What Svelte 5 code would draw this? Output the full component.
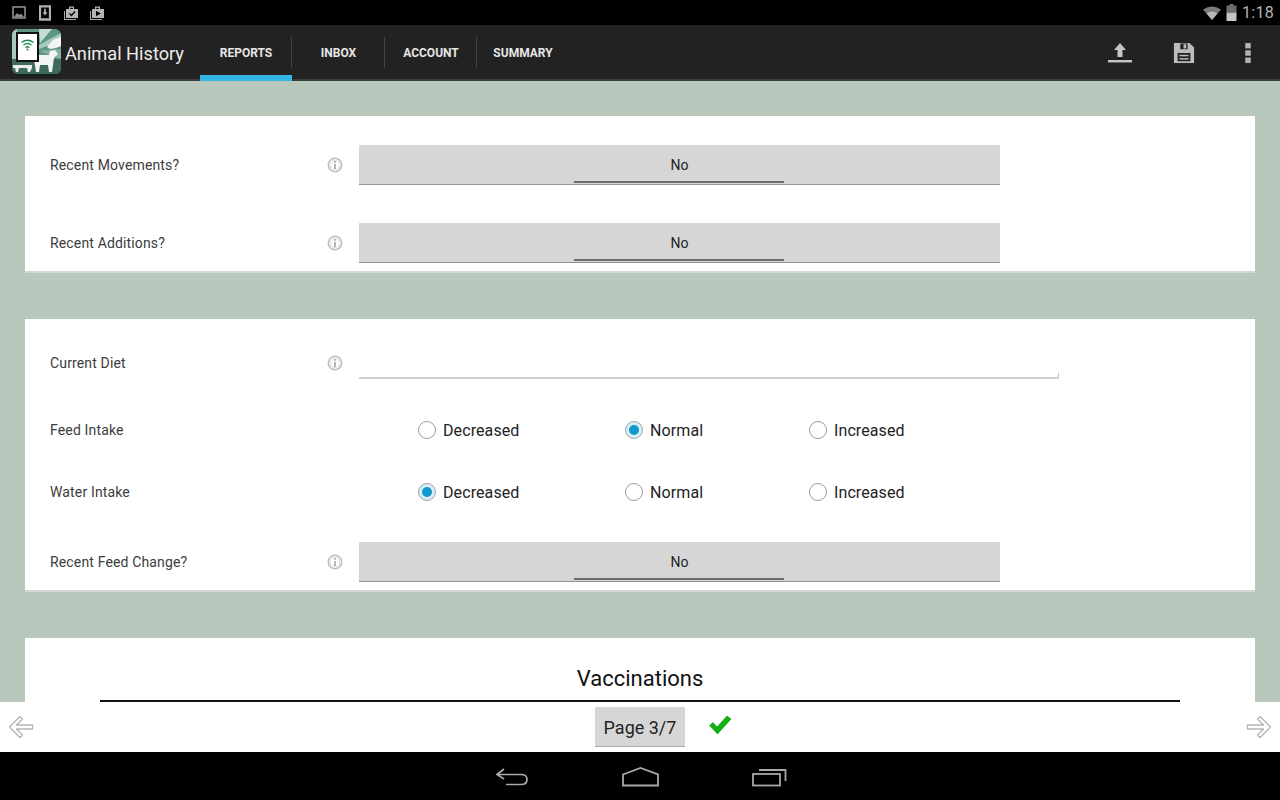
<script>
	const tabs = ['REPORTS', 'INBOX', 'ACCOUNT', 'SUMMARY'];
	const options = ['Decreased', 'Normal', 'Increased'];
	const feedRows = [
		{ label: 'Feed Intake', selected: 'Normal' },
		{ label: 'Water Intake', selected: 'Decreased' }
	];
</script>

{#snippet info()}
	<svg class="info" width="16" height="16" viewBox="0 0 16 16">
		<circle cx="8" cy="8" r="6.7" fill="#fff" stroke="#bdbdbd" stroke-width="1.6" />
		<circle cx="8" cy="8" r="4.7" fill="none" stroke="#dcdcdc" />
		<rect x="7.1" y="7" width="1.8" height="5" fill="#adadad" />
		<rect x="7.1" y="4" width="1.8" height="1.8" fill="#adadad" />
	</svg>
{/snippet}

{#snippet spinnerRow(label)}
	<div class="row">
		<span class="label">{label}</span>
		<span class="info-cell">{@render info()}</span>
		<div class="spinner">
			<span>No</span>
			<i></i>
		</div>
	</div>
{/snippet}

<div class="screen">
	<header class="status">
		<div class="status-icons">
			<svg width="14" height="14" viewBox="0 0 14 14"><rect x="1" y="1" width="12" height="11" fill="none" stroke="#8e8e8e" stroke-width="1.6" /><path d="M2 11 L5 7 L7 9 L9 7.5 L12 11 Z" fill="#8e8e8e" /></svg>
			<svg width="12" height="16" viewBox="0 0 14 18"><path d="M0 0 H14 V18 H0 Z M2.5 2.5 V15 H11.5 V2.5 Z" fill="#b0b0b0" fill-rule="evenodd" /><path d="M6 4 H8 V8 H10 L7 12 L4 8 H6 Z" fill="#b0b0b0" /></svg>
			<svg width="16" height="16" viewBox="0 0 16 16"><path d="M1 6 H2 V14 H13 V15 H1 Z" fill="#a8a8a8" /><path d="M3 4 H6 V1.5 H11 V4 H15 V13 H3 Z M7.2 4 H9.8 V2.8 H7.2 Z" fill="#b4b4b4" fill-rule="evenodd" /><path d="M6.5 8.5 L8.5 10.5 L12 6.5" fill="none" stroke="#000" stroke-width="1.4" /></svg>
			<svg width="16" height="16" viewBox="0 0 16 16"><path d="M1 6 H2 V14 H13 V15 H1 Z" fill="#a8a8a8" /><path d="M3 4 H6 V1.5 H11 V4 H15 V13 H3 Z M7.2 4 H9.8 V2.8 H7.2 Z" fill="#b4b4b4" fill-rule="evenodd" /><path d="M7 5.8 L12 8.5 L7 11.2 Z" fill="#000" /></svg>
		</div>
		<div class="status-right">
			<svg width="18" height="14" viewBox="0 0 18 14"><path d="M0 3.6 Q9 -2.6 18 3.6 L9 14 Z" fill="#7a7a7a" /><path d="M3.6 7.6 Q9 3.6 14.4 7.6 L9 14 Z" fill="#b8b8b8" /></svg>
			<svg width="11" height="17" viewBox="0 0 11 17"><rect x="3.5" y="0" width="4" height="2" fill="#6e6e6e" /><rect x="0.5" y="1.5" width="10" height="7" fill="#6e6e6e" /><rect x="0.5" y="8.5" width="10" height="8.5" fill="#c4c4c4" /></svg>
			<span class="clock">1:18</span>
		</div>
	</header>

	<nav class="actionbar">
		<svg class="logo" width="49" height="48" viewBox="0 0 49 48">
			<defs>
				<clipPath id="logo-clip"><rect width="49" height="45" rx="6" /></clipPath>
			</defs>
			<rect x="3" y="40" width="42" height="7" rx="3" fill="#17201d" />
			<g clip-path="url(#logo-clip)">
				<rect width="49" height="45" fill="#5f9683" />
				<path d="M27 0 H40 L28 14 Z" fill="#c5dcd2" />
				<path d="M27 16 L49 4 V12 L27 20 Z" fill="#a9cbbd" />
				<path d="M27 22 L49 20 V30 Z" fill="#88b3a2" />
				<path d="M0 0 H5 V30 H0 Z" fill="#a6c9ba" />
				<path d="M0 30 H49 V45 H0 Z" fill="#3f6a5b" />
				<path d="M35 18 L41 11 L46 9 L49 8 V17 L44 19 L38 20 Z" fill="#f4f4f2" />
				<path d="M21 26 H37 L38 22 L43 21 L46 25 L42 29 L41 36 L40 43 H37 L36 36 H28 L27 43 H24 L23 36 Z" fill="#f4f4f2" />
				<path d="M1 36 H20 V39 L18 43 H16 L15 39 H7 L6 43 H4 L3 39 H1 Z" fill="#ecece8" />
			</g>
			<rect x="5" y="4" width="21" height="28" fill="#fff" stroke="#111" stroke-width="2" />
			<g fill="none" stroke="#1f8a4c" stroke-width="1.3">
				<path d="M9.5 13.5 Q15.5 9 21.5 13.5" />
				<path d="M11.5 16 Q15.5 13 19.5 16" />
				<path d="M13.5 18.5 Q15.5 17 17.5 18.5" />
			</g>
			<circle cx="15.5" cy="20.5" r="1" fill="#1f8a4c" />
		</svg>
		<span class="app-title">Animal History</span>
		<ul class="tabs">
			{#each tabs as tab, i}
				<li class="tab" class:active={i === 0}>{tab}</li>
			{/each}
		</ul>
		<div class="actions">
			<svg width="24" height="20" viewBox="0 0 24 20"><path d="M12 0 L18 7 H14.5 V14 H9.5 V7 H6 Z" fill="#c4c4c4" /><rect y="17" width="24" height="2.4" fill="#c4c4c4" /></svg>
			<svg width="24" height="22" viewBox="0 0 24 24"><path d="M1 1 H18 L23 6 V23 H1 Z M8 1.5 V8 H16 V1.5 Z M11.5 2.5 H14.5 V7 H11.5 Z M5 12 V21 H19 V12 Z" fill="#bdbdbd" fill-rule="evenodd" /><rect x="7" y="14" width="10" height="1.6" fill="#bdbdbd" /><rect x="7" y="17.6" width="10" height="1.6" fill="#bdbdbd" /></svg>
			<svg class="dots" width="6" height="20" viewBox="0 0 6 22"><rect width="6" height="6" fill="#b4b4b4" /><rect y="8" width="6" height="6" fill="#b4b4b4" /><rect y="16" width="6" height="6" fill="#b4b4b4" /></svg>
		</div>
	</nav>

	<main class="content">
		<section class="card card-one">
			{@render spinnerRow('Recent Movements?')}
			{@render spinnerRow('Recent Additions?')}
		</section>

		<section class="card card-two">
			<div class="row">
				<span class="label">Current Diet</span>
				<span class="info-cell">{@render info()}</span>
				<div class="text-field"></div>
			</div>
			{#each feedRows as r}
				<div class="radio-row">
					<span class="label">{r.label}</span>
					<div class="radios">
						{#each options as opt}
							<span class="radio-opt">
								<span class="radio" class:on={r.selected === opt}></span>
								{opt}
							</span>
						{/each}
					</div>
				</div>
			{/each}
			{@render spinnerRow('Recent Feed Change?')}
		</section>

		<section class="card card-three">
			<h2>Vaccinations</h2>
			<div class="rule"></div>
		</section>
	</main>

	<div class="pager">
		<svg width="26" height="24" viewBox="0 0 26 24"><path d="M12 1.5 L1.5 12 L12 22.5 L14.5 20 L8.5 14 H24.5 V10 H8.5 L14.5 4 Z" fill="#fff" stroke="#b4b4b4" stroke-width="1.3" stroke-linejoin="round" /></svg>
		<div class="pager-mid">
			<button class="page-btn">Page 3/7</button>
			<svg class="check" width="24" height="20" viewBox="0 0 24 20"><path d="M1.5 10.5 L5 7.5 L9 12 L19 1 L23 4 L9.5 19 Z" fill="#0eb30e" stroke="#0a9a0a" stroke-width="0.6" /></svg>
		</div>
		<svg width="26" height="24" viewBox="0 0 26 24"><path d="M14 1.5 L24.5 12 L14 22.5 L11.5 20 L17.5 14 H1.5 V10 H17.5 L11.5 4 Z" fill="#fff" stroke="#b4b4b4" stroke-width="1.3" stroke-linejoin="round" /></svg>
	</div>

	<footer class="navbar">
		<svg width="34" height="20" viewBox="0 0 34 20"><path d="M9 2 L2 7.5 L9 12 M2 7.5 H26 Q32 7.5 32 12.5 Q32 17.5 26 17.5 H11" fill="none" stroke="#a8a8a8" stroke-width="1.7" /></svg>
		<svg width="37" height="20" viewBox="0 0 37 20"><path d="M1 7.5 L18.5 1 L36 7.5 V18.5 H1 Z" fill="none" stroke="#a8a8a8" stroke-width="1.8" /></svg>
		<svg width="35" height="20" viewBox="0 0 35 20"><rect x="1" y="7" width="27" height="11.5" fill="none" stroke="#a8a8a8" stroke-width="1.8" /><path d="M7 3 H33.5 V14" fill="none" stroke="#a8a8a8" stroke-width="1.8" /></svg>
	</footer>
</div>

<style>
	:global(body) {
		margin: 0;
		font-family: Roboto, sans-serif;
	}
	.screen {
		width: 1280px;
		height: 800px;
		display: flex;
		flex-direction: column;
		overflow: hidden;
		background: #b9c8bc;
	}
	.status {
		height: 25px;
		flex: none;
		background: #000;
		display: flex;
		justify-content: space-between;
		align-items: center;
		padding: 0 6px 0 12px;
	}
	.status-icons {
		display: flex;
		align-items: center;
		gap: 13px;
	}
	.status-icons svg:nth-child(3) {
		margin-left: -1px;
	}
	.status-icons svg:nth-child(4) {
		margin-left: -3px;
	}
	.status-right {
		display: flex;
		align-items: center;
		gap: 5px;
	}
	.clock {
		color: #b4b4b4;
		font-size: 16px;
		letter-spacing: 0.3px;
	}
	.actionbar {
		height: 54px;
		flex: none;
		background: #222;
		border-bottom: 2px solid #3a3d3b;
		display: flex;
		align-items: center;
		padding-left: 12px;
	}
	.logo {
		flex: none;
		margin-top: 2px;
	}
	.app-title {
		color: #ececec;
		font-size: 18.2px;
		margin: 3px 0 0 4px;
		width: 135px;
		white-space: nowrap;
	}
	.tabs {
		list-style: none;
		display: flex;
		margin: 0;
		padding: 0;
		align-self: flex-start;
	}
	.tab {
		position: relative;
		display: flex;
		align-items: center;
		justify-content: center;
		color: #e6e6e6;
		font-size: 12px;
		font-weight: 700;
		width: 92px;
		height: 56px;
		box-sizing: border-box;
		padding-bottom: 1px;
	}
	.tab:nth-child(2) { width: 93px; }
	.tab.active {
		border-bottom: 6px solid #33b5e5;
		padding: 5px 0 0;
	}
	.tab:nth-child(-n + 3)::after {
		content: '';
		position: absolute;
		right: 0;
		top: 12px;
		height: 31px;
		width: 1px;
		background: #444;
	}
	.actions {
		margin-left: auto;
		display: flex;
		align-items: center;
		gap: 40px;
		padding: 2px 29px 0 0;
	}
	.dots {
		margin-left: 9px;
	}
	.content {
		flex: 1;
		min-height: 0;
		overflow: hidden;
		padding: 35px 25px 0;
		display: flex;
		flex-direction: column;
		gap: 46px;
	}
	.card {
		flex: none;
		background: #fff;
		border-bottom: 2px solid #d4d8d4;
		padding: 29px 0 0 25px;
		box-sizing: border-box;
	}
	.card-one {
		height: 157px;
		display: flex;
		flex-direction: column;
		gap: 38px;
	}
	.card-two {
		height: 273px;
		padding-top: 24px;
	}
	.card-three {
		height: 200px;
		padding: 26px 75px 0;
		text-align: center;
	}
	h2 {
		margin: 0;
		color: #111;
		font-size: 22px;
		font-weight: 400;
		line-height: 30px;
	}
	.rule {
		height: 2px;
		margin-top: 6px;
		background: #111;
	}
	.row {
		display: flex;
		align-items: center;
		height: 40px;
	}
	.label {
		width: 275px;
		flex: none;
		color: #3c3c3c;
		font-size: 14px;
		letter-spacing: 0.15px;
	}
	.info-cell {
		width: 34px;
		flex: none;
		display: flex;
		justify-content: flex-start;
	}
	.info {
		display: block;
		margin-left: 2px;
	}
	.spinner {
		position: relative;
		width: 641px;
		height: 40px;
		box-sizing: border-box;
		background: #d6d6d6;
		border-bottom: 1px solid #949494;
		display: flex;
		align-items: center;
		justify-content: center;
		color: #222;
		font-size: 14px;
		padding-top: 1px;
	}
	.spinner i {
		position: absolute;
		left: 215px;
		width: 210px;
		bottom: 1px;
		height: 2px;
		background: #6d6d6d;
	}
	.text-field {
		width: 700px;
		height: 36px;
		box-sizing: border-box;
		align-self: flex-start;
		border-bottom: 2px solid #d0d0d0;
		position: relative;
	}
	.text-field::after {
		content: '';
		position: absolute;
		right: 0;
		bottom: 0;
		height: 4px;
		width: 1px;
		background: #c4c4c4;
	}
	.radio-row {
		display: flex;
		align-items: center;
		height: 24px;
	}
	.card-two .row:first-child {
		margin-bottom: 35px;
	}
	.radio-row + .radio-row {
		margin-top: 38px;
	}
	.radio-row + .row {
		margin-top: 38px;
	}
	.radios {
		display: flex;
		margin-left: 93px;
	}
	.radio-opt {
		display: flex;
		align-items: center;
		gap: 7px;
		color: #222;
		font-size: 16px;
		letter-spacing: 0.1px;
	}
	.radio-opt:nth-child(1) { width: 207px; }
	.radio-opt:nth-child(2) { width: 184px; }
	.radio {
		width: 16px;
		height: 16px;
		border-radius: 50%;
		border: 1px solid #9c9c9c;
		background: #fff;
		flex: none;
		position: relative;
	}
	.radio.on {
		background: #d5eef7;
		border-color: #a5a5a5;
	}
	.radio.on::after {
		content: '';
		position: absolute;
		left: 3px;
		top: 3px;
		width: 10px;
		height: 10px;
		border-radius: 50%;
		background: #0f99cc;
	}
	.pager {
		height: 50px;
		flex: none;
		background: #fff;
		display: flex;
		align-items: center;
		justify-content: space-between;
		padding: 0 8px;
		position: relative;
	}
	.pager-mid {
		display: flex;
		align-items: center;
		gap: 23px;
		margin-left: 47px;
	}
	.page-btn {
		width: 90px;
		height: 40px;
		border: 0;
		border-bottom: 1px solid #aaa;
		background: #d6d6d6;
		color: #222;
		font-family: Roboto, sans-serif;
		font-size: 18px;
		padding: 2px 0 0;
	}
	.check {
		margin-bottom: 4px;
	}
	.navbar {
		height: 48px;
		flex: none;
		box-sizing: border-box;
		background: #000;
		display: flex;
		align-items: center;
		justify-content: center;
		gap: 93px;
		padding: 2px 0 0 2px;
	}
</style>
